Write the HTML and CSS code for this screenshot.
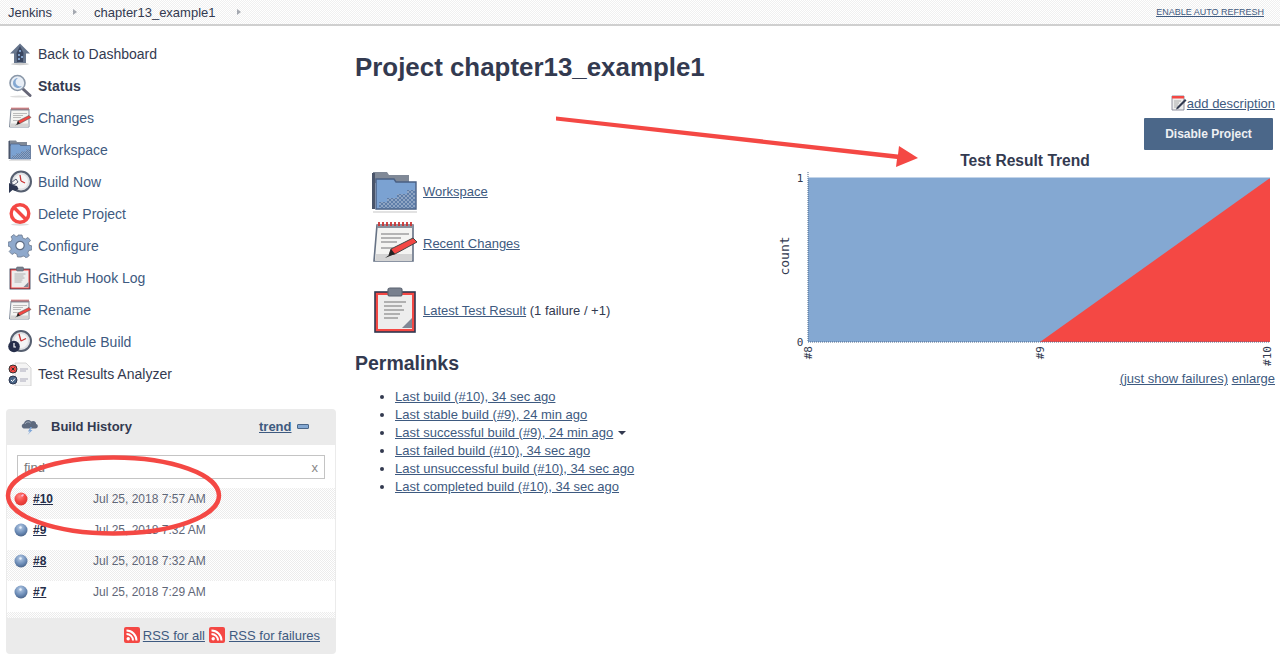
FILE: index.html
```html
<!DOCTYPE html>
<html lang="en">
<head>
<meta charset="utf-8">
<title>chapter13_example1 [Jenkins]</title>
<link rel="stylesheet" href="styles.css">
</head>
<body>
<svg class="defs" width="0" height="0" aria-hidden="true">
  <defs>
    <pattern id="dots" width="2" height="2" patternUnits="userSpaceOnUse"><rect width="1" height="1" fill="#fff" fill-opacity=".3"/><rect x="1" y="1" width="1" height="1" fill="#fff" fill-opacity=".3"/></pattern>
    <symbol id="i-up" viewBox="0 0 24 24">
      <path d="M12 1.500 22 11.500 18 11.500 18 21 6 21 6 11.500 2 11.500Z" fill="#66758c"/>
      <path d="M12 4 15.500 11 15 20 9 20 8.500 11Z" fill="#3a4660"/>
      <path d="M11 8h2v2h-2zM10 12h2v2h-2zM13 14h2v2h-2zM10 16h2v2h-2z" fill="#7f9fc8"/>
      <ellipse cx="12" cy="22" rx="9" ry="1.200" fill="#ccc"/>
    </symbol>
    <symbol id="i-search" viewBox="0 0 24 24">
      <path d="M15 15 22 21.500" stroke="#667" stroke-width="3" stroke-linecap="round"/>
      <circle cx="9.500" cy="9" r="7.500" fill="#e8eef6" stroke="#8a97a8" stroke-width="1.600"/>
      <path d="M5 9a5 5 0 0 1 5-5 5 5 0 0 0-2 6 5 5 0 0 0 6 2 5 5 0 0 1-9-3Z" fill="#84a8d2"/>
      <ellipse cx="11" cy="22.600" rx="9" ry="1" fill="#ddd"/>
    </symbol>
    <symbol id="i-note" viewBox="0 0 24 24">
      <path d="M3 3h18l0 18H1.500Z" fill="#f4f4f2" stroke="#667285" stroke-width=".8"/>
      <path d="M3 2.800h18V4.500H3Z" fill="#8a919d"/>
      <path d="M4 1.500v2M6 1.500v2M8 1.500v2M10 1.500v2M12 1.500v2M14 1.500v2M16 1.500v2M18 1.500v2M20 1.500v2" stroke="#c33" stroke-width=".9"/>
      <path d="M5 7.500h14M5 9.500h10M5 11.500h8M5 14.500h6" stroke="#b4b4b4" stroke-width=".9"/>
      <path d="M2.500 17.500h18V21H2Z" fill="#d4d4d4"/>
      <path d="M10 15 21 9.500 23 11.500 12 17.500 9 18Z" fill="#f44844" stroke="#444" stroke-width=".5"/>
      <path d="M9 18 7 19.500 12 17.500 10 15Z" fill="#222"/>
    </symbol>
    <symbol id="i-folder" viewBox="0 0 24 24">
      <path d="M1 2.500h7l1 1.500h10v4H1Z" fill="#808997"/>
      <path d="M.500 3h1.500v18H.500Z" fill="#4a556a"/>
      <path d="M2.500 6h9l1 1.500h10V21H2.500Z" fill="#7ba2d2" stroke="#4a6084" stroke-width=".7"/>
      <path d="M4 20.500v-3h4v-2h5v-2h5v-2h4v9Z" fill="#5f7ea9"/>
      <path d="M4 20.500v-3h4v-2h5v-2h5v-2h4v9Z" fill="url(#dots)"/>
      <path d="M1 22.500h22" stroke="#e2e2e2" stroke-width="1"/>
    </symbol>
    <symbol id="i-build" viewBox="0 0 24 24">
      <circle cx="13" cy="11.500" r="10" fill="#dfe1e4" stroke="#565f70" stroke-width="2"/>
      <circle cx="13" cy="11.500" r="7" fill="#f5f5f5"/>
      <path d="M13 11 12 5M13 11 17 13" stroke="#c33" stroke-width="1.300"/>
      <path d="M1 23V13l4 2 4 1 1.500 3-3 2-3-1Z" fill="#2c3650"/>
      <path d="M3 13 8 9l2 3-4 3Z" fill="#f4f4f4" stroke="#2c3650" stroke-width=".8"/>
    </symbol>
    <symbol id="i-no" viewBox="0 0 24 24">
      <ellipse cx="12" cy="22.500" rx="9" ry="1.200" fill="#ddd"/>
      <circle cx="12" cy="11.500" r="8.800" fill="#fff" stroke="#f44844" stroke-width="3.400"/>
      <path d="M6 5.500 18 17.500" stroke="#f44844" stroke-width="3.400"/>
    </symbol>
    <symbol id="i-gear" viewBox="0 0 24 24">
      <path d="M10 1h4l.8 3 2.500 1 2.700-1.500 2.500 3-2 2.300.5 2.200 3 1-.2 4-3 .5-1 2.500 1.500 2.500-3 2.500-2.300-2-2.500.6L13.500 23h-4l-.7-3-2.300-1L4 20.500l-2.800-3 2-2.300L2.500 13 0 12l.2-4 3-.5 1-2.500L3 2.800 5.800.5 8 2.500l2-.5Z" fill="#8fa9cc" stroke="#6c7a8e" stroke-width=".8"/>
      <circle cx="12" cy="11.500" r="4.200" fill="#fff" stroke="#5f6e86" stroke-width="1.200"/>
    </symbol>
    <symbol id="i-clip" viewBox="0 0 24 24">
      <rect x="2" y="3" width="20" height="20" fill="#f44844" stroke="#2f3850" stroke-width=".8"/>
      <rect x="3.500" y="4.500" width="17" height="17" fill="#ededed"/>
      <rect x="8.500" y="1" width="7" height="4" rx="1" fill="#78808e" stroke="#5a6270" stroke-width=".6"/>
      <path d="M6.500 8h11M6.500 10h9M6.500 12h10M6.500 14h8M6.500 16h7" stroke="#b0b0b0" stroke-width="1"/>
      <path d="M15.500 21l5-5v5Z" fill="#808795"/>
    </symbol>
    <symbol id="i-clock" viewBox="0 0 24 24">
      <circle cx="13" cy="11" r="10" fill="#dfe1e4" stroke="#565f70" stroke-width="2"/>
      <circle cx="13" cy="11" r="7" fill="#f5f5f5"/>
      <path d="M13 11 11 4M13 11 18 8.500" stroke="#c33" stroke-width="1.300"/>
      <circle cx="6" cy="16.500" r="5.800" fill="#252e4a"/>
      <path d="M6 13v4h2" stroke="#fff" stroke-width="1.200" fill="none"/>
    </symbol>
    <symbol id="i-analyzer" viewBox="0 0 24 24">
      <path d="M7 1h11l5 5v18H7Z" fill="#f4f4f4" stroke="#ccc" stroke-width=".8"/>
      <path d="M12 7h8M12 9h6M12 17h8M12 19h6" stroke="#aab" stroke-width="1"/>
      <circle cx="5" cy="7" r="4" fill="#f44844" stroke="#333" stroke-width="1"/>
      <path d="M3.500 5.500 6.500 8.500M6.500 5.500 3.500 8.500" stroke="#333" stroke-width="1"/>
      <circle cx="5" cy="18" r="4" fill="#4b6789" stroke="#2c3650" stroke-width="1"/>
      <path d="M3 18l1.500 1.500 2.500-3" stroke="#fff" stroke-width="1" fill="none"/>
    </symbol>
    <symbol id="i-cloud" viewBox="0 0 18 18">
      <path d="M3 11.500C0 11 0 7 3 6.500 3.500 3 8 2 10 4.500c3-1.500 5.500.5 5 2.500 2.500.5 2.500 4-.5 4.500Z" fill="#5e6a7e"/>
      <path d="M4 7c1-2 4-3 5.500-1" stroke="#aab4c4" stroke-width="1" fill="none"/>
      <path d="M9.500 10 7 14.500h2L6.500 18l5-5H9.500l1.500-3Z" fill="#7ea6d8"/>
    </symbol>
    <symbol id="i-rss" viewBox="0 0 16 16">
      <rect width="16" height="16" rx="2" fill="#f44844"/>
      <circle cx="4.200" cy="11.800" r="1.700" fill="#fff"/>
      <path d="M2.500 7a6.500 6.500 0 0 1 6.500 6.500M2.500 3.500a10 10 0 0 1 10 10" stroke="#fff" stroke-width="2" fill="none"/>
    </symbol>
    <radialGradient id="g-red" cx=".4" cy=".3" r=".8"><stop offset="0" stop-color="#ff8a86"/><stop offset=".5" stop-color="#f44844"/><stop offset="1" stop-color="#d6322e"/></radialGradient>
    <radialGradient id="g-blue" cx=".45" cy=".3" r=".8"><stop offset="0" stop-color="#b7cce6"/><stop offset=".55" stop-color="#6d8db8"/><stop offset="1" stop-color="#3c5478"/></radialGradient>
    <symbol id="b-red" viewBox="0 0 14 14"><circle cx="7" cy="7" r="6.500" fill="url(#g-red)"/><path d="M7 3.500 9 2 10 3 8 5Z" fill="#fbd"/></symbol>
    <symbol id="b-blue" viewBox="0 0 14 14"><circle cx="7" cy="7" r="6.500" fill="url(#g-blue)"/><circle cx="6.500" cy="4.500" r="1.200" fill="#e8f0fa"/></symbol>
    <symbol id="i-edit" viewBox="0 0 16 16">
      <path d="M1 1h12v14H1Z" fill="#eee" stroke="#778" stroke-width=".8"/>
      <path d="M1 1h12v2.500H1Z" fill="#f44844"/>
      <path d="M3 6h7M3 8h5M3 10h4M3 12h3" stroke="#999" stroke-width=".8"/>
      <path d="M6 12 14 4l1.500 1.500L7.500 13.500 5 14.500Z" fill="#333a50"/>
    </symbol>
  </defs>
</svg>

<header class="topbar">
  <nav class="crumbs">
    <a class="crumb" href="#">Jenkins</a><span class="caret"></span>
    <a class="crumb" href="#">chapter13_example1</a><span class="caret"></span>
  </nav>
  <a class="refresh" href="#">ENABLE AUTO REFRESH</a>
</header>

<div class="page">
  <aside class="side">
    <ul class="tasks">
      <li class="task"><svg class="task-icon"><use href="#i-up"/></svg><a href="#">Back to Dashboard</a></li>
      <li class="task task-on"><svg class="task-icon"><use href="#i-search"/></svg><a href="#">Status</a></li>
      <li class="task"><svg class="task-icon"><use href="#i-note"/></svg><a href="#">Changes</a></li>
      <li class="task"><svg class="task-icon"><use href="#i-folder"/></svg><a href="#">Workspace</a></li>
      <li class="task"><svg class="task-icon"><use href="#i-build"/></svg><a href="#">Build Now</a></li>
      <li class="task"><svg class="task-icon"><use href="#i-no"/></svg><a href="#">Delete Project</a></li>
      <li class="task"><svg class="task-icon"><use href="#i-gear"/></svg><a href="#">Configure</a></li>
      <li class="task"><svg class="task-icon"><use href="#i-clip"/></svg><a href="#">GitHub Hook Log</a></li>
      <li class="task"><svg class="task-icon"><use href="#i-note"/></svg><a href="#">Rename</a></li>
      <li class="task"><svg class="task-icon"><use href="#i-clock"/></svg><a href="#">Schedule Build</a></li>
      <li class="task"><svg class="task-icon"><use href="#i-analyzer"/></svg><a href="#">Test Results Analyzer</a></li>
    </ul>

    <section class="history">
      <div class="history-head">
        <svg class="cloud"><use href="#i-cloud"/></svg>
        <span class="history-title">Build History</span>
        <a class="trend" href="#">trend</a>
        <span class="collapse"></span>
      </div>
      <div class="history-search">
        <div class="find"><span>find</span><span class="find-x">x</span></div>
      </div>
      <div class="build build-odd"><svg class="ball"><use href="#b-red"/></svg><a class="build-no" href="#">#10</a><span class="build-date">Jul 25, 2018 7:57 AM</span></div>
      <div class="build"><svg class="ball"><use href="#b-blue"/></svg><a class="build-no" href="#">#9</a><span class="build-date">Jul 25, 2018 7:32 AM</span></div>
      <div class="build build-odd"><svg class="ball"><use href="#b-blue"/></svg><a class="build-no" href="#">#8</a><span class="build-date">Jul 25, 2018 7:32 AM</span></div>
      <div class="build"><svg class="ball"><use href="#b-blue"/></svg><a class="build-no" href="#">#7</a><span class="build-date">Jul 25, 2018 7:29 AM</span></div>
      <div class="build-tail"></div>
      <div class="history-foot">
        <svg class="rss"><use href="#i-rss"/></svg><a href="#">RSS for all</a>
        <svg class="rss rss-2"><use href="#i-rss"/></svg><a href="#">RSS for failures</a>
      </div>
    </section>
  </aside>

  <main class="main">
    <h1 class="title">Project chapter13_example1</h1>
    <div class="desc"><svg class="edit"><use href="#i-edit"/></svg><a href="#">add description</a></div>
    <div class="actions"><button class="disable" type="button">Disable Project</button></div>

    <div class="content">
      <div class="left">
        <div class="link-row"><svg class="big"><use href="#i-folder"/></svg><a href="#">Workspace</a></div>
        <div class="link-row"><svg class="big"><use href="#i-note"/></svg><a href="#">Recent Changes</a></div>
        <div class="link-row link-row-gap"><svg class="big"><use href="#i-clip"/></svg><span><a href="#">Latest Test Result</a> (1 failure / +1)</span></div>
        <h2 class="perma-title">Permalinks</h2>
        <ul class="perma">
          <li><a href="#">Last build (#10), 34 sec ago</a></li>
          <li><a href="#">Last stable build (#9), 24 min ago</a></li>
          <li><a href="#">Last successful build (#9), 24 min ago</a><span class="menu-caret"></span></li>
          <li><a href="#">Last failed build (#10), 34 sec ago</a></li>
          <li><a href="#">Last unsuccessful build (#10), 34 sec ago</a></li>
          <li><a href="#">Last completed build (#10), 34 sec ago</a></li>
        </ul>
      </div>

      <figure class="trend-box">
        <figcaption class="trend-title">Test Result Trend</figcaption>
        <svg class="chart" viewBox="0 0 505 210" width="505" height="210">
          <g transform="translate(5 0)">
            <rect x="33" y="10" width="462" height="164" fill="#84a8d2"/>
            <path d="M265 174 495 10V174Z" fill="#f44844"/>
            <path d="M33 4V174H495" fill="none" stroke="#4b6789" stroke-width="1" stroke-dasharray="1 1"/>
            <path d="M33 10H495" fill="none" stroke="#84a8d2" stroke-width="1"/>
            <g class="tick">
              <text x="25" y="14" text-anchor="middle">1</text>
              <text x="25" y="178" text-anchor="middle">0</text>
              <text transform="translate(33 178) rotate(-90)" text-anchor="end" dy="4">#8</text>
              <text transform="translate(265 178) rotate(-90)" text-anchor="end" dy="4">#9</text>
              <text transform="translate(495 178) rotate(-90)" text-anchor="end" dy="1">#10</text>
            </g>
            <text class="axis" transform="translate(14 88) rotate(-90)" text-anchor="middle">count</text>
          </g>
        </svg>
        <div class="trend-links"><a href="#">(just show failures)</a> <a href="#">enlarge</a></div>
      </figure>
    </div>
  </main>
</div>

<svg class="marks" width="1280" height="667" viewBox="0 0 1280 667" aria-hidden="true">
  <path d="M556 116.500 898 154.500 899 146 918 158 896 167 897 159 556 120.500Z" fill="#f44844"/>
  <ellipse cx="113.500" cy="495.500" rx="105.500" ry="38" fill="none" stroke="#f44844" stroke-width="4.500"/>
</svg>
</body>
</html>
```

FILE: styles.css
```css
* { box-sizing: border-box; }
html, body { margin: 0; padding: 0; }
body {
  position: relative;
  width: 1280px;
  height: 667px;
  overflow: hidden;
  background: #fff;
  color: #333a50;
  font-family: "Liberation Sans", Arial, sans-serif;
  font-size: 13px;
}
a { color: #3e5a80; text-decoration: underline; }
ul { margin: 0; padding: 0; list-style: none; }
.defs { position: absolute; }

.topbar {
  display: flex;
  align-items: center;
  justify-content: space-between;
  height: 26px;
  padding: 0 16px 0 8px;
  border-bottom: 2px solid #cfcfcf;
  background-color: #fff;
  background-image: repeating-conic-gradient(#f0f0f0 0 25%, #fff 0 50%);
  background-size: 2px 2px;
}
.crumbs { display: flex; align-items: center; }
.crumb { color: #333a50; text-decoration: none; }
.caret {
  width: 0;
  height: 0;
  margin: 0 17px 0 21px;
  border-left: 4px solid #a4a8b0;
  border-top: 3.500px solid transparent;
  border-bottom: 3.500px solid transparent;
}
.refresh { font-size: 9px; color: #3e5a80; }

.page { display: flex; }
.side { width: 343px; flex: none; padding: 12px 4px 0 6px; }
.task {
  display: flex;
  align-items: center;
  height: 32px;
  padding-left: 2px;
  font-size: 14px;
}
.task a { color: #3e5a80; text-decoration: none; }
.task:first-child a, .task:nth-child(11) a { color: #333a50; }
.task-on a { color: #333a50; font-weight: 700; }
.task-icon { width: 24px; height: 24px; margin-right: 6px; flex: none; }

.history {
  width: 330px;
  height: 245px;
  margin-top: 19px;
  display: flex;
  flex-direction: column;
  border-radius: 4px;
  background: #fff;
  overflow: hidden;
}
.history-head {
  display: flex;
  align-items: center;
  height: 36px;
  flex: none;
  padding: 0 0 2px 15px;
  background: #ebebeb;
}
.cloud { width: 18px; height: 18px; margin-right: 12px; flex: none; }
.history-title { width: 208px; font-weight: 700; color: #333a50; }
.trend { font-weight: 700; }
.collapse {
  width: 12px;
  height: 5px;
  margin-left: 5px;
  margin-top: 1px;
  border: 1px solid #4b6789;
  background: #84a8d2;
  border-radius: 1px;
}
.history-search {
  height: 43px;
  flex: none;
  padding: 10px 10px 0;
  border-left: 1px solid #ebebeb;
  border-right: 1px solid #ebebeb;
}
.find {
  display: flex;
  justify-content: space-between;
  align-items: center;
  height: 24px;
  padding: 0 6px;
  border: 1px solid #c4c4c4;
  color: #777;
  font-size: 13px;
}
.find-x { color: #888; }
.build {
  display: flex;
  align-items: flex-start;
  height: 31px;
  flex: none;
  padding: 4px 0 0 7px;
  font-size: 12px;
  line-height: 14px;
  border-left: 1px solid #ebebeb;
  border-right: 1px solid #ebebeb;
}
.build-odd, .build-tail {
  background-image: repeating-conic-gradient(#ececec 0 25%, #fff 0 50%);
  background-size: 2px 2px;
}
.ball { width: 14px; height: 14px; margin-right: 5px; flex: none; }
.build-no { width: 60px; color: #252e4a; font-weight: 700; }
.build-date { color: #5f6778; }
.build-tail {
  height: 6px;
  flex: none;
  border-left: 1px solid #ebebeb;
  border-right: 1px solid #ebebeb;
}
.history-foot {
  display: flex;
  align-items: center;
  justify-content: flex-end;
  flex: 1;
  padding: 0 16px 2px 0;
  background: #ebebeb;
}
.rss { width: 16px; height: 16px; margin-right: 3px; flex: none; }
.rss-2 { margin-left: 4px; margin-right: 4px; }

.main { flex: 1; min-width: 0; padding: 0 5px 0 12px; }
.title {
  margin: 26px 0 0;
  height: 30px;
  font-size: 25.900px;
  line-height: 30px;
  font-weight: 700;
  color: #333a50;
}
.desc {
  display: flex;
  justify-content: flex-end;
  align-items: center;
  height: 20px;
  margin-top: 11px;
}
.edit { width: 16px; height: 16px; flex: none; }
.actions { display: flex; justify-content: flex-end; padding-right: 2px; margin-top: 5px; }
.disable {
  width: 129px;
  height: 32px;
  border: 0;
  border-radius: 1px;
  background: #4b6789;
  color: #eef0f3;
  font: 700 12px "Liberation Sans", Arial, sans-serif;
}
.content { display: flex; justify-content: space-between; }
.left { padding-top: 17px; }
.link-row { display: flex; align-items: center; height: 48px; margin-bottom: 4px; padding-left: 16px; }
.link-row-gap { margin-top: 19px; margin-bottom: 0; }
.big { width: 48px; height: 48px; margin-right: 4px; flex: none; }
.perma-title { margin: 17px 0 0; font-size: 19.500px; line-height: 24px; font-weight: 700; color: #333a50; }
.perma { margin-top: 13px; padding-left: 40px; list-style: disc; }
.perma li { height: 18px; line-height: 18px; }
.menu-caret {
  display: inline-block;
  margin-left: 5px;
  vertical-align: 2px;
  border-top: 4px solid #333a50;
  border-left: 4px solid transparent;
  border-right: 4px solid transparent;
}
.trend-box { width: 505px; margin: 0; }
.trend-title {
  height: 20px;
  margin-top: 2px;
  padding-left: 5px;
  text-align: center;
  font-size: 15.600px;
  line-height: 18px;
  font-weight: 700;
  color: #333a50;
}
.chart { display: block; margin-top: -4px; }
.tick { font: 11px "DejaVu Sans Mono", monospace; fill: #333a50; }
.axis { font: 13px "DejaVu Sans Mono", monospace; fill: #333a50; }
.trend-links { margin-top: -7px; text-align: right; }

.marks { position: absolute; left: 0; top: 0; pointer-events: none; }
```
